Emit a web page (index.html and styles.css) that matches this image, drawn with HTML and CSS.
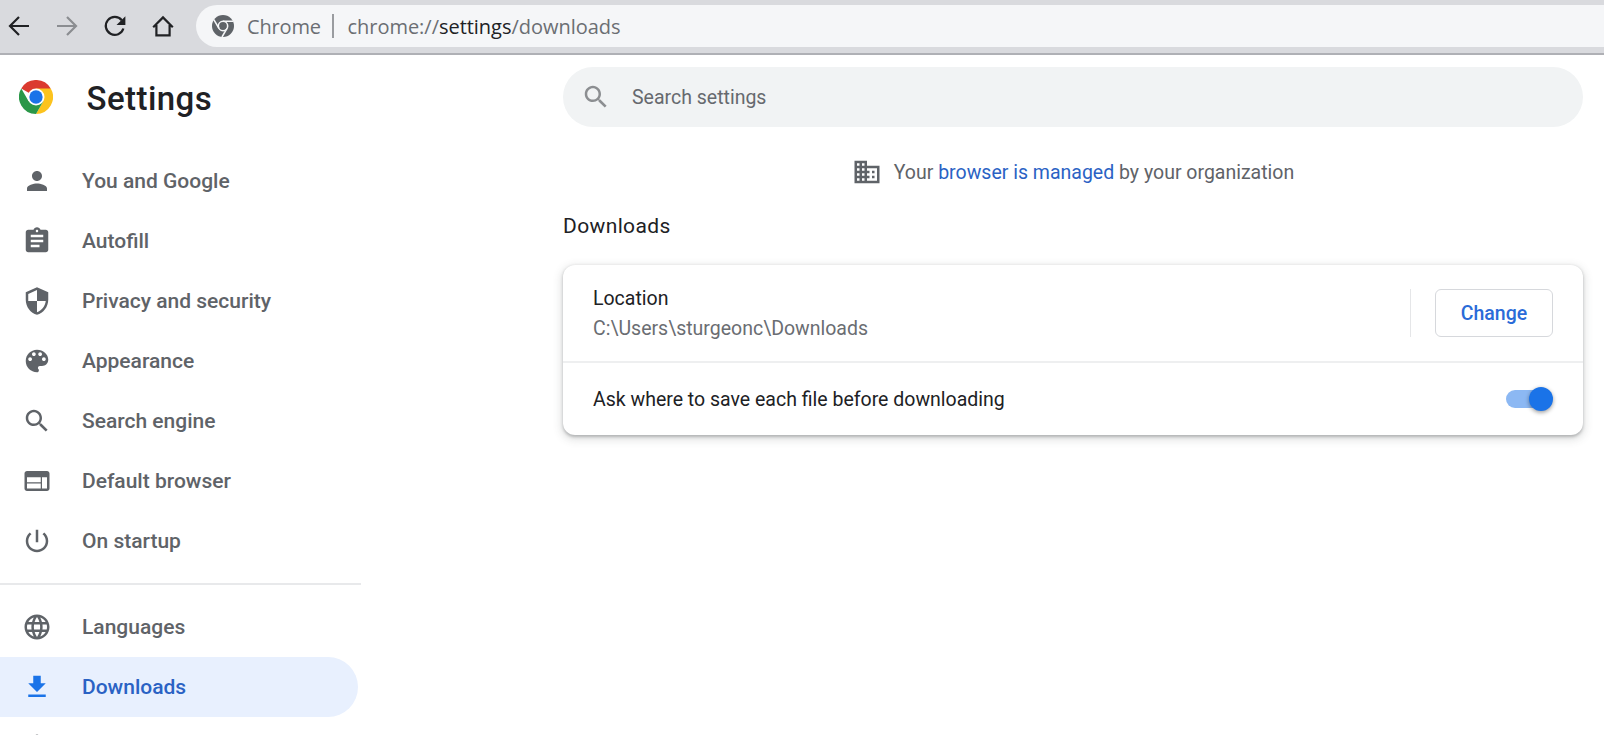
FILE: index.html
```html
<!DOCTYPE html>
<html lang="en">
<head>
<meta charset="utf-8">
<title>Settings - Downloads</title>
<link rel="stylesheet" href="styles.css">
</head>
<body>
<header class="toolbar">
  <nav class="nav-buttons">
    <svg class="nav-icon" viewBox="0 0 24 24"><path d="M22 12H3M12 3l-9 9 9 9"/></svg>
    <svg class="nav-icon disabled" viewBox="0 0 24 24"><path d="M2 12h19M12 3l9 9-9 9"/></svg>
    <svg class="nav-icon" viewBox="0 0 24 24"><path d="M20.4 14.5A9 9 0 1 1 18.8 6.2"/><path class="solid" d="M22.4 2.2v8.9h-8.9z"/></svg>
    <svg class="nav-icon" viewBox="0 0 24 24"><path d="M2.2 13.2L12 3.4l9.800 9.800M5.400 11v10.300h13.200V11"/></svg>
  </nav>
  <div class="omnibox">
    <svg class="site-icon" viewBox="0 0 24 24"><circle cx="12" cy="12" r="12" fill="#5f6368"/><g fill="none" stroke="#f5f6f8" stroke-width="1.7"><circle cx="12" cy="12" r="5.1"/><path d="M12 6.900h11M7.600 14.600L2 5M16.400 14.600L10.900 24"/></g></svg>
    <span class="site-name">Chrome</span>
    <span class="omnibox-divider"></span>
    <span class="url">chrome://<b>settings</b>/downloads</span>
  </div>
</header>
<div class="page">
  <aside class="sidebar">
    <div class="brand">
      <svg class="logo" viewBox="0 0 48 48">
        <path fill="#db3a2f" d="M24 24L3.200 12A24 24 0 0 1 44.800 12z"/>
        <path fill="#fcc31e" d="M24 12h20.800A24 24 0 0 1 24 48l10.400-18z"/>
        <path fill="#2a9748" d="M3.200 12A24 24 0 0 0 24 48l10.400-18L24 24l-10.400 6z"/>
        <circle cx="24" cy="24" r="12" fill="#fff"/><circle cx="24" cy="24" r="9.400" fill="#1a73e8"/>
      </svg>
      <h1>Settings</h1>
    </div>
    <nav class="menu">
      <a class="item"><svg viewBox="0 0 24 24"><path d="M12 12c2.210 0 4-1.790 4-4s-1.790-4-4-4-4 1.790-4 4 1.790 4 4 4zm0 2c-2.670 0-8 1.340-8 4v2h16v-2c0-2.660-5.330-4-8-4z"/></svg>You and Google</a>
      <a class="item"><svg viewBox="0 0 24 24"><path d="M19 3h-4.180C14.400 1.840 13.300 1 12 1s-2.400.84-2.820 2H5c-1.100 0-2 .9-2 2v14c0 1.100.9 2 2 2h14c1.100 0 2-.9 2-2V5c0-1.100-.9-2-2-2zm-7 0c.55 0 1 .45 1 1s-.45 1-1 1-1-.45-1-1 .45-1 1-1zm2 14H7v-2h7v2zm3-4H7v-2h10v2zm0-4H7V7h10v2z"/></svg>Autofill</a>
      <a class="item"><svg viewBox="0 0 24 24"><path d="M12 1L3 5v6c0 5.550 3.840 10.740 9 12 5.160-1.260 9-6.450 9-12V5l-9-4zm0 10.990h7c-.53 4.120-3.280 7.790-7 8.940V12H5V6.300l7-3.110v8.800z"/></svg>Privacy and security</a>
      <a class="item"><svg viewBox="0 0 24 24"><path d="M12 3c-4.970 0-9 4.030-9 9s4.030 9 9 9c.83 0 1.500-.67 1.500-1.500 0-.39-.15-.74-.39-1.010-.23-.26-.38-.61-.38-.99 0-.83.67-1.500 1.500-1.500H16c2.760 0 5-2.240 5-5 0-4.420-4.030-8-9-8zm-5.500 9c-.83 0-1.500-.67-1.500-1.500S5.670 9 6.500 9 8 9.670 8 10.500 7.330 12 6.500 12zm3-4C8.670 8 8 7.330 8 6.500S8.670 5 9.500 5s1.500.67 1.500 1.500S10.330 8 9.500 8zm5 0c-.83 0-1.500-.67-1.500-1.500S13.670 5 14.500 5s1.500.67 1.500 1.500S15.330 8 14.500 8zm3 4c-.83 0-1.500-.67-1.500-1.500S16.670 9 17.500 9s1.500.67 1.500 1.500-.67 1.500-1.500 1.500z"/></svg>Appearance</a>
      <a class="item"><svg viewBox="0 0 24 24"><path d="M15.500 14h-.79l-.28-.27C15.410 12.590 16 11.110 16 9.500 16 5.910 13.090 3 9.500 3S3 5.910 3 9.500 5.910 16 9.500 16c1.610 0 3.090-.59 4.230-1.570l.27.28v.79l5 4.990L20.490 19l-4.990-5zm-6 0C7.010 14 5 11.990 5 9.500S7.010 5 9.500 5 14 7.010 14 9.500 11.990 14 9.500 14z"/></svg>Search engine</a>
      <a class="item"><svg viewBox="0 0 24 24"><path d="M20 4H4c-1.100 0-1.990.9-1.990 2L2 18c0 1.100.9 2 2 2h16c1.100 0 2-.9 2-2V6c0-1.100-.9-2-2-2zm-5 14H4v-4h11v4zm0-5H4V9h11v4zm5 5h-4V9h4v9z"/></svg>Default browser</a>
      <a class="item"><svg viewBox="0 0 24 24"><path d="M13 3h-2v10h2V3zm4.830 2.170l-1.420 1.420C17.990 7.860 19 9.810 19 12c0 3.870-3.130 7-7 7s-7-3.130-7-7c0-2.190 1.010-4.140 2.580-5.420L6.170 5.170C4.230 6.820 3 9.260 3 12c0 4.970 4.030 9 9 9s9-4.030 9-9c0-2.740-1.230-5.180-3.170-6.830z"/></svg>On startup</a>
    </nav>
    <div class="menu-separator"></div>
    <nav class="menu">
      <a class="item"><svg viewBox="0 0 24 24"><path d="M11.990 2C6.470 2 2 6.480 2 12s4.470 10 9.990 10C17.520 22 22 17.520 22 12S17.520 2 11.990 2zm6.930 6h-2.950c-.32-1.250-.78-2.450-1.380-3.560 1.840.63 3.370 1.910 4.330 3.560zM12 4.040c.83 1.200 1.480 2.530 1.910 3.960h-3.820c.43-1.430 1.080-2.760 1.910-3.960zM4.260 14C4.100 13.360 4 12.690 4 12s.1-1.360.26-2h3.380c-.08.66-.14 1.320-.14 2s.06 1.340.14 2H4.260zm.82 2h2.950c.32 1.250.78 2.450 1.380 3.560-1.840-.63-3.370-1.900-4.330-3.560zm2.950-8H5.080c.96-1.660 2.490-2.930 4.330-3.560C8.810 5.550 8.350 6.750 8.030 8zM12 19.960c-.83-1.200-1.480-2.530-1.910-3.960h3.820c-.43 1.430-1.080 2.760-1.910 3.960zM14.340 14H9.660c-.09-.66-.16-1.320-.16-2s.07-1.350.16-2h4.680c.09.65.16 1.320.16 2s-.07 1.340-.16 2zm.25 5.560c.6-1.110 1.060-2.310 1.380-3.560h2.950c-.96 1.650-2.490 2.930-4.330 3.560zM16.360 14c.08-.66.14-1.320.14-2s-.06-1.340-.14-2h3.380c.16.64.26 1.310.26 2s-.1 1.360-.26 2h-3.380z"/></svg>Languages</a>
      <a class="item selected"><svg viewBox="0 0 24 24"><path d="M19 9h-4V3H9v6H5l7 7 7-7zM5 18v2h14v-2H5z"/></svg>Downloads</a>
      <a class="item"><svg viewBox="0 0 24 24"><path d="M12 2c1.100 0 2 .9 2 2s-.9 2-2 2-2-.9-2-2 .9-2 2-2zm9 7h-6v13h-2v-6h-2v6H9V9H3V7h18v2z"/></svg></a>
    </nav>
  </aside>
  <main class="content">
    <div class="search">
      <svg viewBox="0 0 24 24"><path d="M15.500 14h-.79l-.28-.27C15.410 12.590 16 11.110 16 9.500 16 5.910 13.090 3 9.500 3S3 5.910 3 9.500 5.910 16 9.500 16c1.610 0 3.090-.59 4.230-1.570l.27.28v.79l5 4.990L20.490 19l-4.990-5zm-6 0C7.010 14 5 11.990 5 9.500S7.010 5 9.500 5 14 7.010 14 9.500 11.990 14 9.500 14z"/></svg>
      <span>Search settings</span>
    </div>
    <div class="managed">
      <svg viewBox="0 0 24 24"><path d="M12 7V3H2v18h20V7H12zM6 19H4v-2h2v2zm0-4H4v-2h2v2zm0-4H4V9h2v2zm0-4H4V5h2v2zm4 12H8v-2h2v2zm0-4H8v-2h2v2zm0-4H8V9h2v2zm0-4H8V5h2v2zm10 12h-8v-2h2v-2h-2v-2h2v-2h-2V9h8v10zm-2-8h-2v2h2v-2zm0 4h-2v2h2v-2z"/></svg>
      <span>Your <a>browser is managed</a> by your organization</span>
    </div>
    <h2>Downloads</h2>
    <section class="card">
      <div class="row location">
        <div class="labels"><div>Location</div><div class="secondary">C:\Users\sturgeonc\Downloads</div></div>
        <div class="row-separator"></div>
        <button class="change">Change</button>
      </div>
      <div class="row ask">
        <div class="labels">Ask where to save each file before downloading</div>
        <div class="toggle"><span class="knob"></span></div>
      </div>
    </section>
  </main>
</div>
</body>
</html>
```
FILE: styles.css
```css
* { box-sizing: border-box; }
body {
  margin: 0;
  background: #fff;
  color: #202124;
  font: 19.5px/30px Roboto, sans-serif;
}
svg { flex: none; display: block; }

.toolbar {
  display: flex;
  align-items: flex-start;
  height: 55px;
  padding-top: 5px;
  background: #d9dade;
  border-bottom: 2px solid #afb0b5;
}
.nav-buttons {
  display: flex;
  gap: 24px;
  width: 196px;
  padding: 9px 0 0 7px;
}
.nav-icon {
  width: 24px;
  height: 24px;
  fill: none;
  stroke: #202124;
  stroke-width: 2.2;
}
.nav-icon.disabled { stroke: #8b8d91; }
.nav-icon .solid { fill: #202124; stroke: none; }
.omnibox {
  flex: 1;
  display: flex;
  align-items: center;
  height: 42px;
  padding-left: 16px;
  background: #f5f6f8;
  border-radius: 21px 0 0 21px;
  color: #6b6e73;
  font: 20px/40px "Open Sans", "Noto Sans", sans-serif;
  white-space: nowrap;
}
.site-icon { width: 22px; height: 22px; }
.site-name { width: 85px; margin-left: 13px; padding-top: 2px; letter-spacing: -0.15px; }
.omnibox-divider { width: 2px; height: 24px; background: #9a9ca0; }
.url { margin-left: 13.5px; padding-top: 2px; letter-spacing: -0.03px; }
.url b { font-weight: 400; color: #202124; }

.page {
  display: flex;
  height: 680px;
  overflow: hidden;
}
.sidebar { width: 563px; }
.brand {
  display: flex;
  align-items: center;
  height: 96px;
  padding: 0 0 12px 19px;
}
.logo { width: 34px; height: 34px; }
h1 {
  margin: 0 0 0 33.500px;
  padding-top: 3px;
  font-size: 33px;
  font-weight: 500;
  line-height: 40px;
  letter-spacing: 0.45px;
}
.item {
  display: flex;
  align-items: center;
  gap: 30px;
  width: 358px;
  height: 60px;
  padding-left: 22px;
  color: #5f6368;
  font-size: 21px;
  font-weight: 500;
}
.item svg { width: 30px; height: 30px; fill: #5f6368; }
.item.selected {
  background: #e8f0fe;
  border-radius: 0 30px 30px 0;
  color: #2a62c4;
}
.item.selected svg { fill: #1a73e8; }
.menu-separator {
  width: 361px;
  height: 2px;
  margin: 12px 0;
  background: #e8e9eb;
}

.content { width: 1020px; padding-top: 12px; }
.search {
  display: flex;
  align-items: center;
  gap: 21px;
  height: 60px;
  padding-left: 18px;
  border-radius: 30px;
  background: #f1f3f4;
  color: #66696e;
}
.search svg { width: 30px; height: 30px; fill: #8c8e91; }
.search span, .managed span { padding-top: 2px; }
.managed {
  display: flex;
  justify-content: center;
  align-items: center;
  gap: 12px;
  height: 30px;
  margin-top: 30px;
  color: #5f6368;
}
.managed svg { width: 30px; height: 30px; fill: #5f6368; }
.managed a { color: #2a62c4; }
h2 {
  margin: 24px 0;
  font-size: 21px;
  font-weight: 400;
  line-height: 30px;
  letter-spacing: 0.375px;
}
.card {
  height: 170px;
  border-radius: 12px;
  box-shadow: 0 1.5px 3px rgba(60, 64, 67, .3), 0 3px 9px 1.5px rgba(60, 64, 67, .15);
}
.row {
  display: flex;
  align-items: center;
  padding: 0 30px;
}
.labels { flex: 1; padding-top: 2px; }
.location { height: 96px; }
.secondary { color: #6a6d72; }
.row-separator {
  width: 1px;
  height: 48px;
  margin-right: 24px;
  background: #e5e6e8;
}
.change {
  width: 118px;
  height: 48px;
  padding: 0;
  border: 1px solid #d6d8dc;
  border-radius: 6px;
  background: #fff;
  color: #2a6bd8;
  font: 500 19.5px Roboto, sans-serif;
}
.ask { height: 74px; border-top: 2px solid #eeeff0; }
.toggle {
  display: flex;
  align-items: center;
  justify-content: flex-end;
  width: 47px;
  height: 18px;
  background: linear-gradient(#8cb8f3, #8cb8f3) left / 36px 18px no-repeat;
  border-radius: 9px;
}
.knob {
  width: 24px;
  height: 24px;
  flex: none;
  border-radius: 50%;
  background: #1a73e8;
  box-shadow: 0 1.5px 4px rgba(0, 0, 0, .4);
}
```
